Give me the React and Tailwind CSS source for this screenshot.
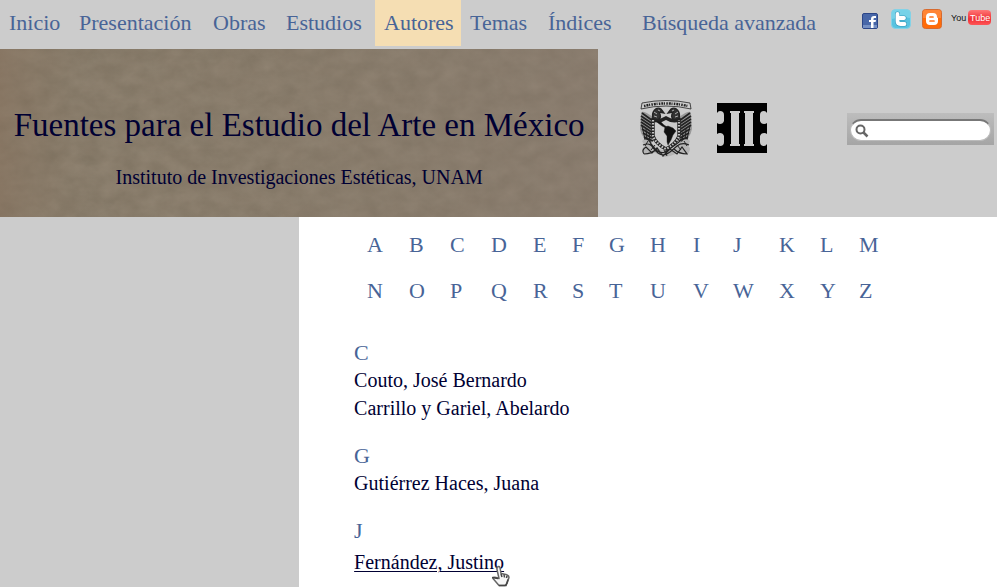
const sections = [
  { letter: "C", names: ["Couto, José Bernardo", "Carrillo y Gariel, Abelardo"] },
  { letter: "G", names: ["Gutiérrez Haces, Juana"] },
];

const navItems = ["Inicio", "Presentación", "Obras", "Estudios", "Autores", "Temas", "Índices", "Búsqueda avanzada"];
const letters = "ABCDEFGHIJKLMNOPQRSTUVWXYZ".split("");

function PaperTexture() {
  return (
    <svg className="absolute inset-0 h-full w-full" aria-hidden="true">
      <filter id="paper" x="0" y="0" width="100%" height="100%" colorInterpolationFilters="sRGB">
        <feTurbulence type="fractalNoise" baseFrequency="0.05 0.07" numOctaves="6" seed="8" />
        <feColorMatrix values="0.08 0.04 0 0 0.475  0.08 0.03 0 0 0.431  0.08 0.03 0 0 0.365  0 0 0 0 1" />
      </filter>
      <linearGradient id="age">
        <stop offset="0" stopColor="#86705b" stopOpacity="0.5" />
        <stop offset="0.15" stopColor="#857a66" stopOpacity="0.2" />
        <stop offset="1" stopColor="#897b70" stopOpacity="0.45" />
      </linearGradient>
      <rect width="100%" height="100%" filter="url(#paper)" />
      <rect width="100%" height="100%" fill="url(#age)" />
    </svg>
  );
}

function Crest() {
  return (
    <svg viewBox="0 0 52 58" className="h-[58px] w-[52px]" role="img" aria-label="UNAM">
      <g fill="none" stroke="#222">
        <path d="M2 3Q26-2 50 3L51 9Q26 3 1 9Z" fill="#ccc" strokeWidth=".8" />
        <path d="M4 6Q26 1 48 6" strokeWidth="2.500" strokeDasharray="1.5 1 2 .7 1 1.300" />
        <path d="M13 17Q2 9 1 13L0 29Q2 40 12 43ZM39 17Q50 9 51 13L52 29Q50 40 40 43Z" fill="#999" stroke="none" />
        <path d="M2 13l11 8M1 16l12 8M1 19l12 8M1 22l12 8M1 25l12 8M2 29l10 6M3 33l9 5M4 37l9 4M50 13l-11 8M51 16l-12 8M51 19l-12 8M51 22l-12 8M51 25l-12 8M50 29l-10 6M49 33l-9 5M48 37l-9 4" strokeWidth="1.700" />
        <path d="M2 26l3 13M6 29l1 12M9 32l1 10M50 26l-3 13M46 29l-1 12M43 32l-1 10" strokeWidth="1" />
        <path d="M13 19C11 12 16 6 21 9l3 4-5-1c2 3 2 6-1 8ZM39 19C41 12 36 6 31 9l-3 4 5-1c-2 3-2 6 1 8Z" fill="#333" strokeWidth="1.300" />
        <path d="M14 12l3 2M14 16l3 1M18 10l2 1M38 12l-3 2M38 16l-3 1M34 10l-2 1" stroke="#ccc" strokeWidth=".8" />
        <path d="M13 20Q20 22 26 18Q32 22 39 20V36Q36 44 26 49Q16 44 13 36Z" fill="#ccc" strokeWidth="3.500" />
        <path d="M13 20V36Q16 44 26 49Q36 44 39 36V20" stroke="#c4c4c4" strokeWidth="2.200" strokeDasharray="1.500 1.500" />
        <path d="M16 21l5 1 3 3 3 2-1 1-4-2-4-3ZM25 27l3-1 5 2 3 3-3 4-2 5-3 5-1-3v-6l-3-4Z" fill="#111" strokeWidth=".4" />
        <path d="M2 41Q6 36 11 43L19 49L26 51L33 49L41 43Q46 36 50 41L48 46Q52 48 48 54L38 53L30 56L24 57L15 53L4 54Q0 48 5 46Z" fill="#b5b5b5" stroke="none" />
        <path d="M4 39q5-1 7 5l5 6q5 4 9 2l6-4 8-6q2-5 9-3M3 45q7-3 10 3l5 5q6 4 12-1l7-6q5-4 12-1M4 54q-3-4 2-7l6 6 5-5 6 8 7-7 7 5 5-7 5 7q-8 0-13-5M4 54q8 0 14-6" strokeWidth="1.200" />
        <path d="M8 41l-3 5M15 45l-4 5M44 41l3 5M37 45l4 5M24 50l3 6" strokeWidth="1" />
      </g>
    </svg>
  );
}

function InstituteLogo() {
  return (
    <svg viewBox="0 0 50 50" className="h-[50px] w-[50px]" role="img" aria-label="Instituto de Investigaciones Estéticas">
      <path d="M0 0H50V50H0Z" />
      <g fill="#ccc">
        <path d="M13 8h10v2h-1v31h1v2H13v-2h1V10h-1ZM27 8h10v2h-1v31h1v2H27v-2h1V10h-1Z" />
        <path d="M0 10Q1 8 3 8Q7 8 7 12V18Q6 21 3 21Q1 21 0 20ZM0 31Q1 30 3 30Q6 30 7 33V39Q7 43 3 43Q1 43 0 41ZM50 10Q49 8 47 8Q43 8 43 12V18Q44 21 47 21Q49 21 50 20ZM50 31Q49 30 47 30Q44 30 43 33V39Q43 43 47 43Q49 43 50 41Z" />
      </g>
    </svg>
  );
}

function SocialLinks() {
  return (
    <div className="mr-1 ml-auto flex shrink-0 items-start gap-[13px] pt-[9px]">
      <a href="#facebook" aria-label="Facebook" className="pt-1">
        <svg viewBox="0 0 16 16" className="size-4">
          <rect x=".5" y=".5" width="15" height="15" rx="1.5" fill="#4867a8" stroke="#2c4687" />
          <path d="M1 12h14v3H1Z" fill="#7590c4" />
          <path d="M9 15V9H7V7h2V6q0-3 3-3h2v2h-1.500q-1 0-1 1v1H14l-.4 2h-2.100v6Z" fill="#fff" />
        </svg>
      </a>
      <a href="#twitter" aria-label="Twitter">
        <svg viewBox="0 0 20 20" className="size-5">
          <rect x=".5" y=".5" width="19" height="19" rx="4" fill="#58c3e0" stroke="#83d3e8" />
          <path d="M1 4q0-3 3-3h12q3 0 3 3v5Q10 7 1 10Z" fill="#8bdcec" opacity=".6" />
          <path d="M6.500 5v7q0 3 3 3h4M7 9h6" fill="none" stroke="#3299bb" strokeWidth="5" strokeLinecap="round" />
          <path d="M6.500 5v7q0 3 3 3h4M7 9h6" fill="none" stroke="#fff" strokeWidth="3.800" strokeLinecap="round" />
        </svg>
      </a>
      <a href="#blogger" aria-label="Blogger" className="-ml-[2px]">
        <svg viewBox="0 0 20 20" className="size-5">
          <rect x=".5" y=".5" width="19" height="19" rx="3" fill="#ff6b08" stroke="#d66a2f" />
          <path d="M1 3q0-2 2-2h14q2 0 2 2v6H1Z" fill="#ff9654" opacity=".6" />
          <path d="M8 4h3q4 0 4 4 0 1 1 1v3q0 4-4 4H8q-4 0-4-4V8q0-4 4-4Z" fill="#fff" />
          <path d="M8 8h3M8 12h4" stroke="#ff721b" strokeWidth="1.700" strokeLinecap="round" />
        </svg>
      </a>
      <a href="#youtube" aria-label="YouTube" className="-ml-1">
        <svg viewBox="0 0 42 20" className="h-5 w-[42px]">
          <defs><linearGradient id="tube" x2="0" y2="1"><stop stopColor="#ff7777" /><stop offset=".6" stopColor="#ef3035" /><stop offset="1" stopColor="#ff5556" /></linearGradient></defs>
          <rect x="17" y="1" width="23" height="15" rx="4" fill="url(#tube)" />
          <text x="0" y="12" fontFamily="Liberation Sans, sans-serif" fontSize="9" fill="#111">You</text>
          <text x="19" y="12" fontFamily="Liberation Sans, sans-serif" fontSize="9" fill="#fff">Tube</text>
        </svg>
      </a>
    </div>
  );
}

function HandPointer() {
  return (
    <svg viewBox="0 0 20 22" className="pointer-events-none absolute top-[17px] -right-1.5 h-[22px] w-5" aria-hidden="true">
      <path d="M7 2.500q2-2 3 0l1 6 5 1q3 1 3 3l-2 6-2 2H9l-6-7q0-2 3-1l3 1-2-9Z" fill="#f6f6f6" stroke="#666" strokeWidth="1.500" strokeLinejoin="round" />
      <path d="M2 12.500l6 1M11 9l1 3M14 9.500l.5 3M17 11l-.5 2M9 20.500h7l2-6" fill="none" stroke="#444" strokeWidth="1.500" />
    </svg>
  );
}

export default function App() {
  return (
    <div className="flex min-h-screen flex-col bg-[#ccc] font-['Liberation_Serif',serif] text-[#000033]">
      <div className="flex h-[49px] items-start">
        <nav className="grid grid-cols-[70px_134px_73px_98px_86px_78px_94px_190px] text-[22px] leading-[46px] whitespace-nowrap text-[#486497]">
          {navItems.map((item) => (
            <a key={item} href="#seccion" className={item === "Autores" ? "bg-[#f5deb3] pl-[9px]" : "pl-[9px]"}>{item}</a>
          ))}
        </nav>
        <SocialLinks />
      </div>
      <header className="flex h-[168px]">
        <div className="relative w-3/5 overflow-hidden bg-[#857a66] text-center">
          <PaperTexture />
          <div className="relative pt-14 whitespace-nowrap">
            <h1 className="text-[33px] leading-10">Fuentes para el Estudio del Arte en México</h1>
            <p className="pt-5 text-[20px] leading-6">Instituto de Investigaciones Estéticas, UNAM</p>
          </div>
        </div>
        <div className="flex flex-1 items-start pt-[51px] pl-[42px]">
          <Crest />
          <div className="pt-[3px] pl-[25px]"><InstituteLogo /></div>
          <form role="search" className="mt-[13px] mr-[3px] ml-auto h-8 w-[147px] bg-gradient-to-b from-[#bdbdbd] to-[#a5a5a5] px-[3px] pt-[6px]">
            <label className="flex h-[22px] items-center rounded-full border border-t-2 border-[#bbb] border-t-[#777] bg-white pl-1">
              <svg viewBox="0 0 14 14" className="size-[14px] shrink-0" fill="none" stroke="#666" strokeWidth="2"><circle cx="5.500" cy="5.500" r="4" /><path d="M8.500 8.500l4 4" strokeWidth="2.500" /></svg>
              <input type="search" aria-label="Buscar" className="w-full min-w-0 bg-transparent px-1 text-sm outline-none" />
            </label>
          </form>
        </div>
      </header>
      <div className="flex flex-1">
        <main className="ml-auto w-[70%] bg-white pt-[5px] pl-[55px]">
          <nav aria-label="Índice alfabético" className="grid grid-cols-[42px_41px_41px_42px_39px_37px_41px_43px_40px_46px_41px_39px_30px] pl-[13px] text-[22px] leading-[46px] text-[#486497]">
            {letters.map((letter) => <a key={letter} href={"#" + letter}>{letter}</a>)}
          </nav>
          <div className="flex flex-col gap-[21px] pt-[26px] text-[20px] leading-7">
            {sections.map(({ letter, names }) => (
              <section key={letter}>
                <h2 id={letter} className="text-[22px] leading-[26px] text-[#486497]">{letter}</h2>
                {names.map((name) => <a key={name} href="#autor" className="block">{name}</a>)}
              </section>
            ))}
            <section>
              <h2 id="J" className="pb-1 text-[22px] leading-[26px] text-[#486497]">J</h2>
              <a href="#justino" className="relative block w-fit underline decoration-1 underline-offset-2">Fernández, Justino<HandPointer /></a>
            </section>
          </div>
        </main>
      </div>
    </div>
  );
}
